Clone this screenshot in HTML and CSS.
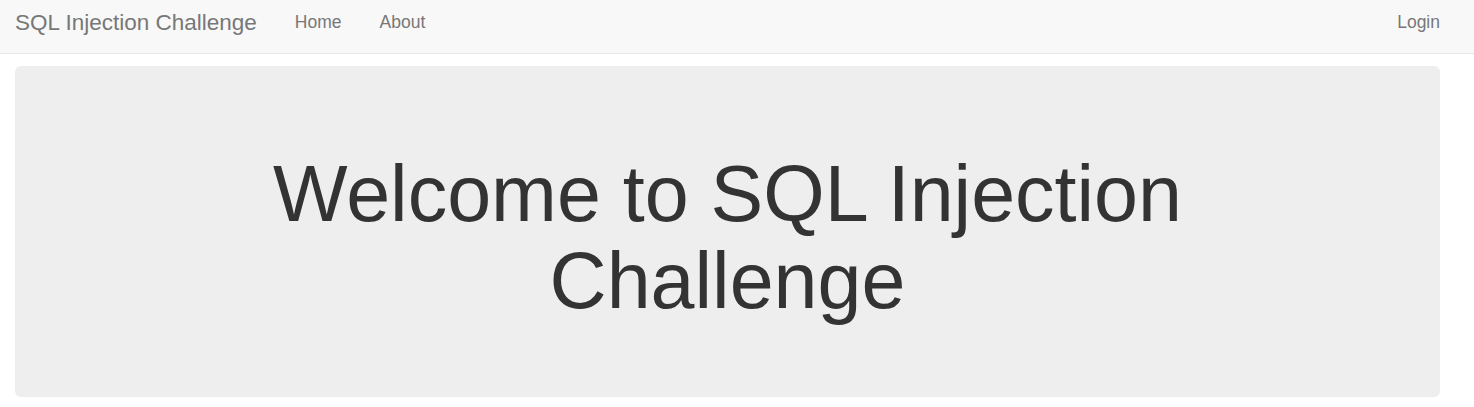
FILE: index.html
```html
<!DOCTYPE html>
<html lang="en">
<head>
<meta charset="utf-8">
<title>SQL Injection Challenge</title>
<link rel="stylesheet" href="styles.css">
</head>
<body>
<nav class="navbar">
  <div class="navbar-inner">
    <a class="brand" href="#">SQL Injection Challenge</a>
    <ul class="nav">
      <li><a href="#">Home</a></li>
      <li><a href="#">About</a></li>
    </ul>
    <ul class="nav nav-right">
      <li><a href="#">Login</a></li>
    </ul>
  </div>
</nav>
<main class="container">
  <section class="jumbotron">
    <h1>Welcome to SQL Injection Challenge</h1>
  </section>
</main>
</body>
</html>
```

FILE: styles.css
```css
html, body {
  margin: 0;
  padding: 0;
  background: #fff;
  font-family: "Liberation Sans", Arial, sans-serif;
  color: #333;
}

a {
  text-decoration: none;
}

.navbar {
  background: #f8f8f8;
  border-bottom: 1px solid #e7e7e7;
  height: 53px;
}

.navbar-inner {
  display: flex;
  align-items: stretch;
  height: 53px;
  padding: 0 34px 0 15px;
}

.brand {
  color: #777;
  font-size: 22.5px;
  line-height: 53px;
  height: 53px;
  display: block;
  margin-right: 19px;
  position: relative;
  top: -4px;
}

.nav {
  list-style: none;
  margin: 0;
  padding: 0;
  display: flex;
}

.nav li a {
  display: block;
  color: #777;
  font-size: 17.5px;
  line-height: 53px;
  padding: 0 19px;
  position: relative;
  top: -4px;
}

.nav-right {
  margin-left: auto;
}

.nav-right li a {
  padding-right: 0;
}

.container {
  padding: 12px 34px 0 15px;
}

.jumbotron {
  background: #eee;
  border-radius: 6px;
  padding: 84px 40px 73px;
  height: 174px;
  text-align: center;
}

.jumbotron h1 {
  font-size: 79px;
  line-height: 87px;
  font-weight: 400;
  color: #333;
  max-width: 1000px;
  margin: 0 auto;
}
```
